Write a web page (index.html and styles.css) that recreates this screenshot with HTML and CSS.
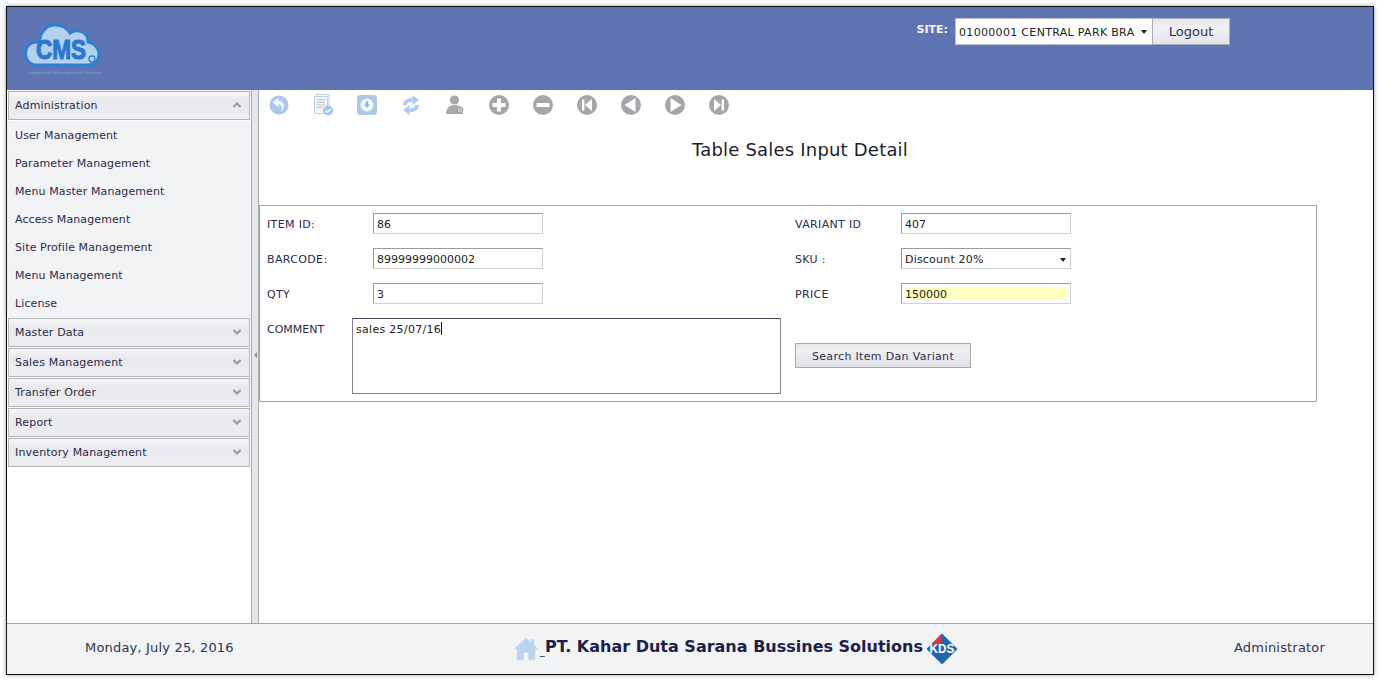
FILE: index.html
```html
<!DOCTYPE html>
<html lang="en">
<head>
<meta charset="utf-8">
<title>Table Sales Input Detail</title>
<link rel="stylesheet" href="styles.css">
</head>
<body>
<div class="window">
  <header class="top">
    <div class="logo">
      <svg width="80" height="56" viewBox="0 0 80 56">
        <path d="M13 43 C5 43 1.5 37 1.5 32 C1.5 25 6 20 12 20 C13 20 15 20 16 21 C15 10 23 3 31 3 C38 3 43 6 46 11 C50 8 56 8 60 11 C63 13 64 17 64 20 C71 21 75 27 75 32 C75 38 71 43 64 43 Z" fill="#b3d0ec" stroke="#2f80d5" stroke-width="3"/>
        <text x="37" y="37" text-anchor="middle" class="logo-cms" textLength="50" lengthAdjust="spacingAndGlyphs">CMS</text>
        <circle cx="68" cy="37" r="3" fill="none" stroke="#2f80d5" stroke-width="1.3"/>
        <text x="41" y="52" text-anchor="middle" class="logo-sub" textLength="73" lengthAdjust="spacingAndGlyphs">Integrated Management System</text>
      </svg>
    </div>
    <div class="site">
      <span class="site-label">SITE:</span>
      <div class="site-select"><span class="site-value">01000001 CENTRAL PARK BRA</span><span class="arrow"></span></div>
      <button class="logout" type="button">Logout</button>
    </div>
  </header>

  <div class="middle">
    <aside class="sidebar">
      <div class="acc-head"><span>Administration</span>
        <svg class="chev" width="8" height="6" viewBox="0 0 8 6"><path d="M.5 5 L4 1.5 L7.5 5" fill="none" stroke="#97979f" stroke-width="2"/></svg></div>
      <ul class="acc-list">
        <li>User Management</li>
        <li>Parameter Management</li>
        <li>Menu Master Management</li>
        <li>Access Management</li>
        <li>Site Profile Management</li>
        <li>Menu Management</li>
        <li>License</li>
      </ul>
      <div class="acc-head"><span>Master Data</span>
        <svg class="chev" width="8" height="6" viewBox="0 0 8 6"><path d="M.5 1 L4 4.5 L7.5 1" fill="none" stroke="#97979f" stroke-width="2"/></svg></div>
      <div class="acc-head"><span>Sales Management</span>
        <svg class="chev" width="8" height="6" viewBox="0 0 8 6"><path d="M.5 1 L4 4.5 L7.5 1" fill="none" stroke="#97979f" stroke-width="2"/></svg></div>
      <div class="acc-head"><span>Transfer Order</span>
        <svg class="chev" width="8" height="6" viewBox="0 0 8 6"><path d="M.5 1 L4 4.5 L7.5 1" fill="none" stroke="#97979f" stroke-width="2"/></svg></div>
      <div class="acc-head"><span>Report</span>
        <svg class="chev" width="8" height="6" viewBox="0 0 8 6"><path d="M.5 1 L4 4.5 L7.5 1" fill="none" stroke="#97979f" stroke-width="2"/></svg></div>
      <div class="acc-head"><span>Inventory Management</span>
        <svg class="chev" width="8" height="6" viewBox="0 0 8 6"><path d="M.5 1 L4 4.5 L7.5 1" fill="none" stroke="#97979f" stroke-width="2"/></svg></div>
    </aside>
    <div class="splitter"><span class="split-arrow"></span></div>
    <main class="content">
      <div class="toolbar">
        <svg width="22" height="22" viewBox="0 0 22 22"><circle cx="11" cy="11" r="9.5" fill="#a9c8ea"/><path d="M10.5 3.5 L4.5 8.5 L10.5 13 V10.2 C13.5 10.2 14.5 13 13 18 C17 14 17 7 10.5 7 Z" fill="#f4f8fc"/></svg>
        <svg width="22" height="22" viewBox="0 0 22 22"><path d="M4 .5 H17 V15 H4 Z" fill="#f7f9fc" stroke="#c6d6ea"/><path d="M2.5 2.5 H15.5 V19.5 H2.5 Z" fill="#f3f6fb" stroke="#bcd0e8"/><path d="M5 6 H13 M5 8.5 H13 M5 11 H13 M5 13.5 H10.5" stroke="#b9bfc9" stroke-width="1.2"/><circle cx="16" cy="16.5" r="5" fill="#a3c6ea"/><path d="M13.5 16.5 L15.5 18.5 L18.5 15" fill="none" stroke="#fff" stroke-width="1.5"/></svg>
        <svg width="22" height="22" viewBox="0 0 22 22"><rect x="1.5" y="1.5" width="19" height="19" rx="2.5" fill="#a9c8ea" stroke="#bcc5d2"/><circle cx="11" cy="11" r="6.5" fill="#f4f8fc"/><path d="M9.8 7.5 H12.2 V10.6 H14 L11 14 L8 10.6 H9.8 Z" fill="#8fb6e0"/></svg>
        <svg width="22" height="22" viewBox="0 0 22 22"><path d="M3 11 C3 6.5 7 3.5 12.5 4 V1 L19 6 L12.5 11 V7.8 C9.5 7.6 7.5 8.5 6.5 11 Z" fill="#b0cdec"/><path d="M3 11 C3 6.5 7 3.5 12.5 4 V1 L19 6 L12.5 11 V7.8 C9.5 7.6 7.5 8.5 6.5 11 Z" fill="#b0cdec" transform="rotate(180 11 11)"/></svg>
        <svg width="22" height="22" viewBox="0 0 22 22"><circle cx="10.5" cy="6" r="4.6" fill="#a9a9ad"/><path d="M2 20 C2 14 5.5 11 10.5 11 C15.5 11 19 14 19 20 Z" fill="#a9a9ad"/><circle cx="16" cy="16" r="3" fill="#c2c2c6" stroke="#a0a0a4"/></svg>
        <svg width="22" height="22" viewBox="0 0 22 22"><circle cx="11" cy="11" r="10" fill="#a5a5aa"/><path d="M9 4.5 H13 V9 H17.5 V13 H13 V17.5 H9 V13 H4.5 V9 H9 Z" fill="#fff"/></svg>
        <svg width="22" height="22" viewBox="0 0 22 22"><circle cx="11" cy="11" r="10" fill="#a5a5aa"/><rect x="4.5" y="9" width="13" height="4" fill="#fff"/></svg>
        <svg width="22" height="22" viewBox="0 0 22 22"><circle cx="11" cy="11" r="10" fill="#a5a5aa"/><rect x="6" y="5.5" width="2.4" height="11" fill="#fff"/><path d="M16 5 V17 L9 11 Z" fill="#fff"/></svg>
        <svg width="22" height="22" viewBox="0 0 22 22"><circle cx="11" cy="11" r="10" fill="#a5a5aa"/><path d="M15.5 4 V18 L4.5 11 Z" fill="#fff"/></svg>
        <svg width="22" height="22" viewBox="0 0 22 22"><circle cx="11" cy="11" r="10" fill="#a5a5aa"/><path d="M6.5 4 V18 L17.5 11 Z" fill="#fff"/></svg>
        <svg width="22" height="22" viewBox="0 0 22 22"><circle cx="11" cy="11" r="10" fill="#a5a5aa"/><rect x="13.6" y="5.5" width="2.4" height="11" fill="#fff"/><path d="M6 5 V17 L13 11 Z" fill="#fff"/></svg>
      </div>
      <h1 class="title">Table Sales Input Detail</h1>
      <form class="panel">
        <div class="col col-left">
          <div class="row"><label class="lbl">ITEM ID:</label><input class="field" type="text" value="86"></div>
          <div class="row"><label class="lbl">BARCODE:</label><input class="field" type="text" value="89999999000002"></div>
          <div class="row"><label class="lbl">QTY</label><input class="field" type="text" value="3"></div>
          <div class="row row-comment"><label class="lbl lbl-comment">COMMENT</label>
            <div class="memo">sales 25/07/16<span class="caret"></span></div></div>
        </div>
        <div class="col">
          <div class="row"><label class="lbl">VARIANT ID</label><input class="field" type="text" value="407"></div>
          <div class="row"><label class="lbl">SKU :</label>
            <div class="field field-select"><span>Discount 20%</span><span class="arrow"></span></div></div>
          <div class="row"><label class="lbl">PRICE</label><input class="field field-price" type="text" value="150000"></div>
          <button class="search" type="button">Search Item Dan Variant</button>
        </div>
      </form>
    </main>
  </div>

  <footer class="bottom">
    <div class="date">Monday, July 25, 2016</div>
    <div class="company">
      <svg class="home" width="26" height="26" viewBox="0 0 26 26"><path d="M13 2 L18 6.5 V3.5 H21 V9.3 L25 13 H22 V24 H15.5 V16.5 H10.5 V24 H4 V13 H1 Z" fill="#b9d3f0" stroke="#d5dbe3" stroke-width=".8"/></svg>
      <span class="underscore">_</span><span class="company-name">PT. Kahar Duta Sarana Bussines Solutions</span>
      <svg class="kds" width="32" height="32" viewBox="0 0 32 32"><path d="M16 .5 L31.5 16 L16 31.5 L.5 16 Z" fill="#1f66ad"/><path d="M16 .5 L5 11.5 H15 Z" fill="#d9383a"/><text x="16" y="20" text-anchor="middle" class="kds-text" textLength="25" lengthAdjust="spacingAndGlyphs">KDS</text></svg>
    </div>
    <div class="user">Administrator</div>
  </footer>
</div>
</body>
</html>
```
FILE: styles.css
```css
* { box-sizing: border-box; }
html, body { margin: 0; height: 100%; }
body {
  background: #fff;
  padding: 6px 5px 5px 6px;
  font-family: "DejaVu Sans", Verdana, sans-serif;
  font-size: 11px;
  color: #2b2b4b;
  overflow: hidden;
}
.window {
  width: 1368px;
  height: 669px;
  border: 1px solid #111;
  box-shadow: 0 0 4px #999;
  display: flex;
  flex-direction: column;
  background: #fff;
}
.top {
  height: 83px;
  flex: none;
  background: #5f75b3;
  display: flex;
  justify-content: space-between;
  align-items: flex-start;
}
.logo { padding: 15px 0 0 17px; line-height: 0; }
.logo-cms { font: bold 28px "Liberation Sans", sans-serif; fill: #2a78cf; stroke: #2a78cf; stroke-width: 1.1px; }
.logo-sub { font: 4px "Liberation Sans", sans-serif; fill: #7ea7d8; }
.site { display: flex; align-items: flex-start; margin: 11px 143px 0 0; }
.site-label { font-weight: bold; color: #f2f4fa; margin: 5px 7px 0 0; }
.site-select {
  width: 198px;
  height: 27px;
  background: #fff;
  border: 1px solid #b9bdc9;
  display: flex;
  align-items: center;
  justify-content: space-between;
  padding: 1px 5px 0 3px;
  color: #222;
  letter-spacing: .32px;
  white-space: nowrap;
  overflow: hidden;
}
.site-value { width: 176px; overflow: hidden; }
.arrow {
  flex: none;
  width: 0;
  height: 0;
  border-left: 3.5px solid transparent;
  border-right: 3.5px solid transparent;
  border-top: 4px solid #222;
}
.logout {
  width: 78px;
  height: 27px;
  margin-left: -1px;
  border: 1px solid #a9adb9;
  background: linear-gradient(#e6e7eb, #f1f1f4 35%, #e4e5ea);
  font: 13px "DejaVu Sans", Verdana, sans-serif;
  color: #2f2f4a;
  padding: 0;
}
.middle { flex: 1; display: flex; min-height: 0; }
.sidebar {
  width: 244px;
  flex: none;
  background: #fff;
  padding: 1px 1px 0;
  display: flex;
  flex-direction: column;
  gap: 1px;
}
.acc-head {
  height: 29px;
  flex: none;
  border: 1px solid #b4b5bb;
  background: linear-gradient(#f6f6f8, #e9eaee 30%, #ecedf0);
  display: flex;
  align-items: center;
  justify-content: space-between;
  padding: 0 8px 0 6px;
  letter-spacing: .16px;
}
.chev { margin-top: -2px; }
.acc-list {
  list-style: none;
  margin: 0 -1px;
  padding: 0 0 0 8px;
  background: #f2f3f5;
}
.acc-list li { height: 28px; padding-top: 1px; line-height: 28px; letter-spacing: .1px; }
.splitter {
  width: 8px;
  flex: none;
  background: #e4e6ea;
  border-left: 1px solid #a9a9b1;
  border-right: 1px solid #a9a9b1;
  display: flex;
  align-items: center;
  justify-content: center;
  padding-bottom: 3px;
}
.split-arrow {
  width: 0;
  height: 0;
  border-top: 3px solid transparent;
  border-bottom: 3px solid transparent;
  border-right: 3px solid #8d8d95;
}
.content { flex: 1; min-width: 0; }
.toolbar {
  display: flex;
  gap: 22px;
  padding: 4px 0 0 9px;
  height: 28px;
}
.title {
  margin: 21px 0 0;
  padding-right: 32px;
  text-align: center;
  font-weight: normal;
  font-size: 18px;
  letter-spacing: .2px;
  line-height: 22px;
  color: #1c1c2c;
}
.panel {
  margin-top: 44px;
  width: 1058px;
  height: 197px;
  border: 1px solid #a3a3ab;
  padding: 7px 0 0 7px;
  display: flex;
}
.col { display: flex; flex-direction: column; }
.col-left { width: 528px; }
.row { display: flex; align-items: center; height: 21px; margin-bottom: 14px; }
.lbl { width: 106px; flex: none; padding-top: 2px; letter-spacing: .35px; }
.field {
  width: 170px;
  height: 21px;
  border: 1px solid;
  border-color: #9a9aa6 #cfd0d6 #cfd0d6 #9a9aa6;
  background: #fff;
  padding: 1px 3px 0;
  font: 11px "DejaVu Sans", Verdana, sans-serif;
  color: #222;
  outline: none;
}
.field-select {
  display: flex;
  align-items: center;
  justify-content: space-between;
  padding: 2px 4px 0 3px;
  letter-spacing: .2px;
}
.field-price { padding: 2px 3px 0; background: #ffffc0; box-shadow: inset 0 0 0 3px #fff; }
.row-comment { align-items: flex-start; height: 76px; margin: 0; }
.lbl-comment { width: 85px; padding-top: 5px; letter-spacing: 0; }
.memo {
  width: 429px;
  height: 76px;
  border: 1px solid #80808c;
  border-top-color: #44445a;
  padding: 3px;
  color: #222;
  letter-spacing: .3px;
  line-height: 13px;
}
.caret { display: inline-block; width: 1px; height: 13px; background: #111; vertical-align: -2px; }
.search {
  width: 176px;
  height: 25px;
  margin-top: 25px;
  border: 1px solid #a5a7b3;
  background: linear-gradient(#e8e9ed, #f0f0f3 30%, #dfe0e6);
  font: 11px "DejaVu Sans", Verdana, sans-serif;
  letter-spacing: .33px;
  color: #2f2f4a;
  padding: 2px 0 0;
}
.bottom {
  height: 51px;
  flex: none;
  background: #f2f3f5;
  border-top: 1px solid #a3a3ab;
  display: flex;
  align-items: center;
  justify-content: space-between;
  padding: 0 48px 0 78px;
  font-size: 13px;
  letter-spacing: .18px;
}
.date, .user { color: #33334f; margin-top: -4px; }
.company { display: flex; align-items: center; margin-left: 3px; }
.home { margin-top: -1px; }
.underscore { color: #33336a; font-size: 10px; margin: 2px 0 0 1px; }
.company-name { font-size: 16px; font-weight: bold; letter-spacing: 0; color: #1e1e4a; margin-top: -5px; }
.kds { margin-left: 3px; }
.kds-text { font: bold 12px "Liberation Sans", sans-serif; fill: #fff; }
```
